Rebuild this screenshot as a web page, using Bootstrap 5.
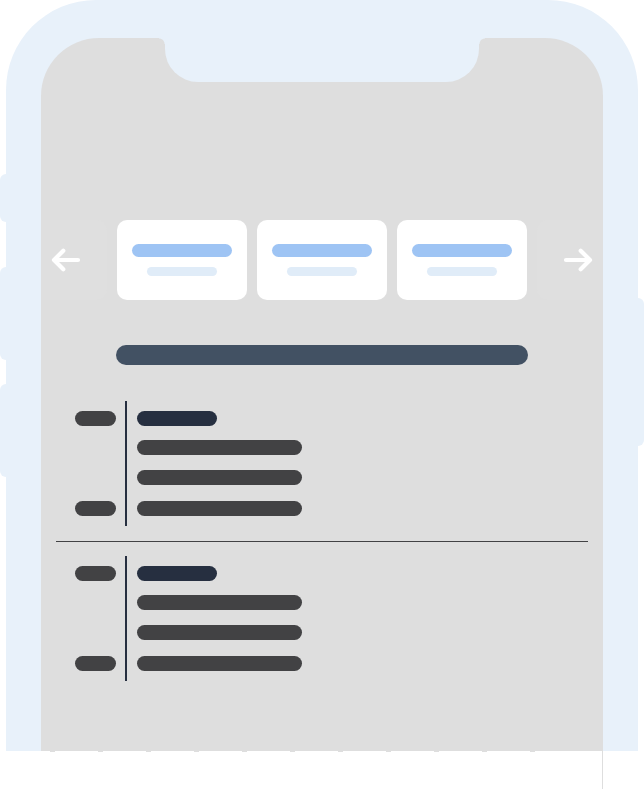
<!DOCTYPE html>
<html lang="en">
<head>
<meta charset="utf-8">
<meta name="viewport" content="width=device-width, initial-scale=1">
<title>Phone agenda</title>
<link rel="stylesheet" href="https://cdn.jsdelivr.net/npm/bootstrap@5.3.0/dist/css/bootstrap.min.css">
<style>
:root { --shell: #e8f1fa; --glass: #dedede; --ink: #262f40; --pill: #424244; }
body { font-family: "Liberation Sans", Arial, sans-serif; background: #fff; }
.phone { margin: 0 6px; padding: 38px 35px 0; background: var(--shell); border-radius: 90px 90px 0 0; }
.side-key { position: absolute; width: 12px; background: var(--shell); border-radius: 6px; z-index: -1; }
.side-key.start { left: -6px; }
.side-key.end { right: -6px; height: 148px; top: 298px; }
.key-mute { top: 174px; height: 48px; }
.key-up { top: 267px; height: 93px; }
.key-down { top: 384px; height: 93px; }
.screen { background: var(--glass); border-radius: 58px 58px 0 0; padding-bottom: 70px; }
.notch { width: 314px; height: 44px; background: var(--shell); border-radius: 0 0 33px 33px; }
.notch::before, .notch::after { content: ""; position: absolute; top: 0; width: 6px; height: 6px; }
.notch::before { right: 100%; background: radial-gradient(circle at 0 100%, transparent 5px, var(--shell) 6px); }
.notch::after { left: 100%; background: radial-gradient(circle at 100% 100%, transparent 5px, var(--shell) 6px); }
.days { margin-top: 138px; gap: 10px; }
.step { flex: 1 1 0; height: 80px; background: #dfdfdf; color: #fff; }
.step-prev { border-radius: 0 10px 10px 0; padding: 0 16px 0 0; }
.step-next { border-radius: 10px 0 0 10px; padding: 0 0 0 16px; }
.day { width: 130px; height: 80px; padding-top: 24px; gap: 10px; border-radius: 10px; }
.day-name { width: 100px; height: 13px; background: #9ec4f4; }
.day-date { width: 70px; height: 9px; background: #e0ecf8; }
.heading-bar { width: 412px; height: 20px; margin: 45px auto 36px; background: #425163; }
.agenda { padding: 0 15px; }
.entry { height: 125px; padding-left: 19px; }
.entry-times { width: 50px; padding: 10px 0; }
.entry-body { padding: 10px; border-left: 2px solid var(--ink); }
.bar { height: 15px; background: var(--pill); }
.bar-time { width: 41px; }
.bar-title { width: 80px; margin-bottom: 14px; background: var(--ink); }
.bar-text { width: 165px; margin-bottom: 15px; }
.bar-text:last-child { margin: auto 0 0; }
.rule { margin: 15px 0 14px; border-top: 1px solid var(--pill); opacity: 1; }
.below { margin: 0 41px; min-height: 38px; border-right: 1px solid var(--glass); }
.ticks { width: 528px; height: 1px; margin-left: 9px; background: repeating-linear-gradient(to right, var(--glass) 0 5px, transparent 5px 48px); }
</style>
</head>
<body class="min-vh-100 d-flex flex-column overflow-x-hidden">
<main class="phone position-relative z-0">
  <span class="side-key start key-mute"></span>
  <span class="side-key start key-up"></span>
  <span class="side-key start key-down"></span>
  <span class="side-key end"></span>
  <div class="screen">
    <div class="notch position-relative mx-auto"></div>
    <nav class="days d-flex" aria-label="Days">
      <button type="button" class="step step-prev border-0 d-flex align-items-center justify-content-center" aria-label="Previous">
        <svg width="30" height="26" viewBox="0 0 30 26" fill="none" stroke="currentColor" stroke-width="4.2" stroke-linecap="round" stroke-linejoin="round" aria-hidden="true"><path d="M27 13H4M12.300 3.700L3 13L12.300 22.300"/></svg>
      </button>
      <div class="day bg-white d-flex flex-column align-items-center"><div class="day-name rounded-pill"></div><div class="day-date rounded-pill"></div></div>
      <div class="day bg-white d-flex flex-column align-items-center"><div class="day-name rounded-pill"></div><div class="day-date rounded-pill"></div></div>
      <div class="day bg-white d-flex flex-column align-items-center"><div class="day-name rounded-pill"></div><div class="day-date rounded-pill"></div></div>
      <button type="button" class="step step-next border-0 d-flex align-items-center justify-content-center" aria-label="Next">
        <svg width="30" height="26" viewBox="0 0 30 26" fill="none" stroke="currentColor" stroke-width="4.2" stroke-linecap="round" stroke-linejoin="round" aria-hidden="true"><path d="M3 13H26M17.700 3.700L27 13L17.700 22.300"/></svg>
      </button>
    </nav>
    <div class="heading-bar rounded-pill"></div>
    <section class="agenda">
      <div class="entry d-flex">
        <div class="entry-times d-flex flex-column justify-content-between"><div class="bar bar-time rounded-pill"></div><div class="bar bar-time rounded-pill"></div></div>
        <div class="entry-body d-flex flex-column">
          <div class="bar bar-title rounded-pill"></div>
          <div class="bar bar-text rounded-pill"></div>
          <div class="bar bar-text rounded-pill"></div>
          <div class="bar bar-text rounded-pill"></div>
        </div>
      </div>
      <hr class="rule">
      <div class="entry d-flex">
        <div class="entry-times d-flex flex-column justify-content-between"><div class="bar bar-time rounded-pill"></div><div class="bar bar-time rounded-pill"></div></div>
        <div class="entry-body d-flex flex-column">
          <div class="bar bar-title rounded-pill"></div>
          <div class="bar bar-text rounded-pill"></div>
          <div class="bar bar-text rounded-pill"></div>
          <div class="bar bar-text rounded-pill"></div>
        </div>
      </div>
    </section>
  </div>
</main>
<footer class="below flex-grow-1"><div class="ticks"></div></footer>
<script src="https://cdn.jsdelivr.net/npm/bootstrap@5.3.0/dist/js/bootstrap.bundle.min.js"></script>
</body>
</html>
